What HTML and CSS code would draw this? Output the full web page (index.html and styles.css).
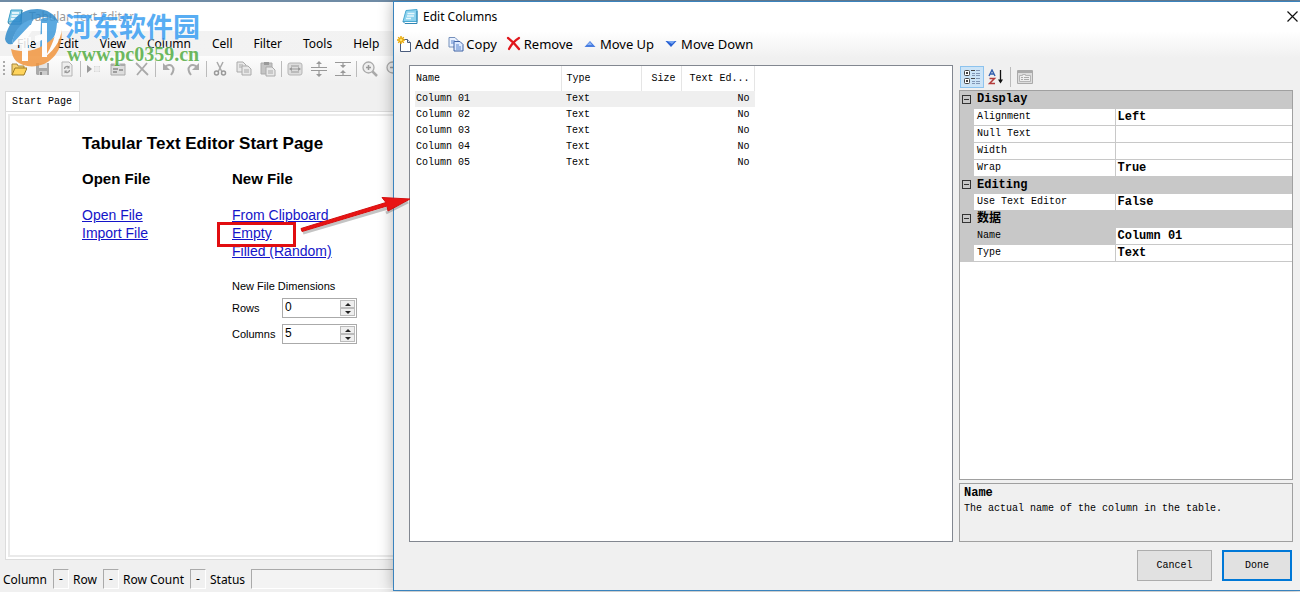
FILE: index.html
```html
<!DOCTYPE html>
<html lang="en">
<head>
<meta charset="utf-8">
<title>Tabular Text Editor</title>
<link rel="stylesheet" href="styles.css">
</head>
<body>
<div class="window">
  <header class="titlebar">
    <svg class="app-icon" width="16" height="16" viewBox="0 0 16 16"><path d="M4 1L15 1L13 13L1 13Z" fill="#8fd0ea" stroke="#3b9cc6"/><path d="M1 13l1 2h12l1-14" fill="none" stroke="#2a7ba5"/><path d="M5 4h7M4.500 7h7M4 10h5" stroke="#fff" stroke-width="1.500"/></svg>
    <span class="muted-title">Tabular Text Editor</span>
  </header>
  <nav class="menubar">
    <button class="menu">File</button><button class="menu">Edit</button><button class="menu">View</button><button class="menu">Column</button><button class="menu">Cell</button><button class="menu">Filter</button><button class="menu">Tools</button><button class="menu">Help</button>
  </nav>
  <div class="toolbar">
    <i class="grip"></i>
    <button class="tool" aria-label="Open"><svg width="16" height="16" viewBox="0 0 16 16"><path d="M1 14V3h5l1 2h6v3" fill="#f5d273" stroke="#a8873a"/><path d="M1 14L4 7h12l-3 7z" fill="#ffd45c" stroke="#9c7a22"/></svg></button>
    <button class="tool" aria-label="Save"><svg width="16" height="16" viewBox="0 0 16 16"><path d="M1 2h13v12H2l-1-1z" fill="#aaa"/><path d="M4 2h8v5H4z" fill="#e5e5e5"/><path d="M4 10h8v4H4z" fill="#ccc"/><path d="M5 11h2v3H5z" fill="#888"/></svg></button>
    <button class="tool" aria-label="Refresh"><svg width="16" height="16" viewBox="0 0 16 16"><path d="M3 1h7l3 3v11H3z" fill="#eee" stroke="#b5b5b5"/><path d="M5.500 8a2.500 2.500 0 0 1 4.500-1.500M10.500 9A2.500 2.500 0 0 1 6 10.500" fill="none" stroke="#999" stroke-width="1.300"/><path d="M10.500 4.500v3h-3zM5.500 12.500v-3h3z" fill="#999"/></svg></button>
    <i class="sep"></i>
    <button class="tool" aria-label="Insert"><svg width="16" height="16" viewBox="0 0 16 16"><path d="M1 4v8l5-4z" fill="#999"/><path d="M8 5h6v6H8z" fill="#d5d5d5"/><path d="M8 7h6M8 9h6M10 5v6M12 5v6" stroke="#f5f5f5"/></svg></button>
    <button class="tool" aria-label="Edit columns"><svg width="16" height="16" viewBox="0 0 16 16"><path d="M1 3h14v11H1z" fill="#ddd" stroke="#aaa"/><path d="M1 4h14" stroke="#aaa" stroke-width="2"/><path d="M3 8h5M3 11h4M9 9h4" stroke="#888" stroke-width="1.500"/></svg></button>
    <button class="tool" aria-label="Delete"><svg width="16" height="16" viewBox="0 0 16 16"><path d="M2 2l12 12M13 2L3 14" stroke="#aaa" stroke-width="1.800"/></svg></button>
    <i class="sep"></i>
    <button class="tool" aria-label="Undo"><svg width="16" height="16" viewBox="0 0 16 16"><path d="M4 6c5-5 12 0 6 8" fill="none" stroke="#aaa" stroke-width="2"/><path d="M2 2v7h7z" fill="#aaa"/></svg></button>
    <button class="tool" aria-label="Redo"><svg width="16" height="16" viewBox="0 0 16 16"><path d="M12 6C7 1 0 6 6 14" fill="none" stroke="#aaa" stroke-width="2"/><path d="M14 2v7H7z" fill="#aaa"/></svg></button>
    <i class="sep"></i>
    <button class="tool" aria-label="Cut"><svg width="16" height="16" viewBox="0 0 16 16"><path d="M5 1l5 10M11 1L6 11" stroke="#aaa" stroke-width="1.500"/><circle cx="4.500" cy="12" r="2" fill="none" stroke="#999" stroke-width="1.500"/><circle cx="11.500" cy="12" r="2" fill="none" stroke="#999" stroke-width="1.500"/></svg></button>
    <button class="tool" aria-label="Copy"><svg width="16" height="16" viewBox="0 0 16 16"><path d="M1 1h6l3 3v7H1z" fill="#e8e8e8" stroke="#aaa"/><path d="M6 5h6l3 3v6H6z" fill="#e8e8e8" stroke="#aaa"/><path d="M3 4h4M3 6h3M8 9h5M8 11h5" stroke="#aaa"/></svg></button>
    <button class="tool" aria-label="Paste"><svg width="16" height="16" viewBox="0 0 16 16"><path d="M1 2h11v11H1z" fill="#c4c4c4" stroke="#aaa"/><path d="M4 1h5v3H4z" fill="#999"/><path d="M6 6h6l3 3v6H6z" fill="#e8e8e8" stroke="#aaa"/><path d="M8 10h5M8 12h5" stroke="#aaa"/></svg></button>
    <i class="sep"></i>
    <button class="tool" aria-label="Fit width"><svg width="16" height="16" viewBox="0 0 16 16"><rect x="1" y="2" width="14" height="12" rx="2" fill="#ddd" stroke="#b5b5b5"/><path d="M4 5h8M4 11h8M3 8h10" stroke="#999"/><path d="M2 8l3-2v4zM14 8l-3-2v4z" fill="#999"/></svg></button>
    <button class="tool" aria-label="Expand rows"><svg width="16" height="16" viewBox="0 0 16 16"><path d="M0 6.500h16M0 9.500h16" stroke="#999"/><path d="M8 1v5M8 10v5" stroke="#888"/><path d="M8 0l3 3H5zM8 16l3-3H5z" fill="#999"/></svg></button>
    <button class="tool" aria-label="Collapse rows"><svg width="16" height="16" viewBox="0 0 16 16"><path d="M0 1.500h16M0 14.500h16" stroke="#999"/><path d="M8 2v4M8 10v4" stroke="#888"/><path d="M8 7l3-3H5zM8 9l3 3H5z" fill="#999"/></svg></button>
    <i class="sep"></i>
    <button class="tool" aria-label="Zoom in"><svg width="16" height="16" viewBox="0 0 16 16"><circle cx="6.500" cy="6.500" r="5.500" fill="#eee" stroke="#aaa" stroke-width="1.300"/><path d="M10.500 10.500l4.500 4.500" stroke="#aaa" stroke-width="2.500"/><path d="M4 6.500h5M6.500 4v5" stroke="#999" stroke-width="1.500"/></svg></button>
    <button class="tool" aria-label="Zoom out"><svg width="16" height="16" viewBox="0 0 16 16"><circle cx="6.500" cy="6.500" r="5.500" fill="#eee" stroke="#aaa" stroke-width="1.300"/><path d="M4 6.500h5" stroke="#999" stroke-width="1.500"/></svg></button>
  </div>
  <div class="tabs"><button class="tab">Start Page</button></div>
  <main class="tab-page">
    <div class="start">
      <h1>Tabular Text Editor Start Page</h1>
      <div class="start-columns">
        <section>
          <h2>Open File</h2>
          <a href="#">Open File</a>
          <a href="#">Import File</a>
        </section>
        <section>
          <h2>New File</h2>
          <a href="#">From Clipboard</a>
          <a href="#" class="marked">Empty</a>
          <a href="#">Filled (Random)</a>
          <p class="dimensions">New File Dimensions</p>
          <div class="field"><label for="rows">Rows</label><span class="spinner"><input id="rows" type="text" value="0"><span class="spin-buttons"><button aria-label="More rows"><i class="up"></i></button><button aria-label="Fewer rows"><i class="down"></i></button></span></span></div>
          <div class="field"><label for="columns">Columns</label><span class="spinner"><input id="columns" type="text" value="5"><span class="spin-buttons"><button aria-label="More columns"><i class="up"></i></button><button aria-label="Fewer columns"><i class="down"></i></button></span></span></div>
        </section>
      </div>
    </div>
  </main>
  <footer class="status">
    <span>Column</span><span class="cell">-</span><span>Row</span><span class="cell">-</span><span>Row Count</span><span class="cell">-</span><span>Status</span><span class="cell fill"></span>
  </footer>
</div>

<div class="dialog" role="dialog" aria-label="Edit Columns">
  <header class="dialog-title">
    <svg width="16" height="16" viewBox="0 0 16 16"><path d="M4 1.500l11-1v12H1z" fill="#8fd3ee" stroke="#4aa9d2"/><path d="M1 12.500l2 2h12V2" fill="none" stroke="#2f86b4"/><path d="M5.500 4.500h7M5 7h7M4 9.500h5" stroke="#e6f7fd" stroke-width="1.300"/></svg>
    <span>Edit Columns</span>
    <button class="close" aria-label="Close"><svg width="11" height="11" viewBox="0 0 11 11"><path d="M.5.5l10 10M10.500.5l-10 10" stroke="#111" stroke-width="1.200"/></svg></button>
  </header>
  <div class="dialog-tools">
    <button><svg width="16" height="16" viewBox="0 0 16 16"><path d="M3.500 3.500h7l3 3v9h-10z" fill="#fff" stroke="#4a5c7c"/><path d="M10.500 3.500v3h3" fill="#dce6f5" stroke="#4a5c7c"/><path d="M4 0v8M0 4h8M1.200 1.200l5.600 5.600M6.800 1.200L1.200 6.800" stroke="#e8a800" stroke-width="1.400"/><circle cx="4" cy="4" r="2" fill="#ffe26a" stroke="#eaa400"/></svg>Add</button>
    <button><svg width="16" height="16" viewBox="0 0 16 16"><path d="M1 1.500h6l3 3V11H1z" fill="#e9f1ff" stroke="#7590bb"/><path d="M6 5.500h6l3 3V15H6z" fill="#dce9ff" stroke="#3f62a4"/><path d="M3 5h4M3 7h3M8 9h3M8 11h5M8 13h5" stroke="#5d87cd"/></svg>Copy</button>
    <button><svg width="16" height="16" viewBox="0 0 16 16"><path d="M2 2c4 3 8 7 11 11M13 2C8 5 5 9 3 13" fill="none" stroke="#e0161b" stroke-width="2.200" stroke-linecap="round"/></svg>Remove</button>
    <button><svg width="16" height="16" viewBox="0 0 16 16"><path d="M8 5l5.500 6h-11z" fill="#477ce0"/><path d="M8 6l2 3H5z" fill="#8db5f5"/></svg>Move Up</button>
    <button><svg width="16" height="16" viewBox="0 0 16 16"><path d="M2.500 5h11L8 11z" fill="#2760d2"/><path d="M4 5h8L9 8z" fill="#76a6f3"/></svg>Move Down</button>
  </div>
  <div class="dialog-body">
    <div class="list">
      <table>
        <colgroup><col class="c-name"><col class="c-type"><col class="c-size"><col class="c-edit"></colgroup>
        <thead><tr><th>Name</th><th>Type</th><th class="r">Size</th><th>Text Ed...</th></tr></thead>
        <tbody>
          <tr class="selected"><td>Column 01</td><td>Text</td><td></td><td class="r">No</td></tr>
          <tr><td>Column 02</td><td>Text</td><td></td><td class="r">No</td></tr>
          <tr><td>Column 03</td><td>Text</td><td></td><td class="r">No</td></tr>
          <tr><td>Column 04</td><td>Text</td><td></td><td class="r">No</td></tr>
          <tr><td>Column 05</td><td>Text</td><td></td><td class="r">No</td></tr>
        </tbody>
      </table>
    </div>
    <aside class="properties">
      <div class="prop-tools">
        <button class="on" aria-label="Categorized"><svg width="18" height="16" viewBox="0 0 18 16"><rect x="1.500" y="1.500" width="5" height="5" rx="1" fill="#fff" stroke="#444"/><rect x="1.500" y="9.500" width="5" height="5" rx="1" fill="#fff" stroke="#444"/><path d="M3 4h2M4 3v2M3 12h2M4 11v2" stroke="#000"/><path d="M8 1.500h4M8 9.500h4" stroke="#444"/><path d="M9 4.500h3M13 4.500h4M9 6.500h3M13 6.500h4M9 12.500h3M13 12.500h4M9 14.500h3M13 14.500h4M13 1.500h4M13 9.500h4" stroke="#8196b5"/></svg></button>
        <button aria-label="Alphabetical"><svg width="16" height="16" viewBox="0 0 16 16"><path d="M1 7l3-6 3 6M2 5h4" fill="none" stroke="#315fae" stroke-width="1.400"/><path d="M1.500 9.500h5l-5 5h5.500" fill="none" stroke="#b33b3b" stroke-width="1.500"/><path d="M12.500 1v12" stroke="#111" stroke-width="1.300"/><path d="M10 10.500h5l-2.500 4z" fill="#111"/></svg></button>
        <i class="sep"></i>
        <button aria-label="Property pages"><svg width="16" height="16" viewBox="0 0 16 16"><path d="M.5 1.500h15v13H.5z" fill="#ddd" stroke="#aaa"/><path d="M1 3h14" stroke="#aaa" stroke-width="2"/><path d="M2.500 6.500h3v-1h3v1h5v6h-11z" fill="#eee" stroke="#b5b5b5"/><path d="M4 8.500h2M7 8.500h5M4 10.500h2M7 10.500h5" stroke="#aaa"/></svg></button>
      </div>
      <div class="prop-grid">
        <table>
          <colgroup><col class="p-gutter"><col class="p-name"><col></colgroup>
          <tbody>
            <tr class="cat"><td><i class="minus"></i></td><th colspan="2">Display</th></tr>
            <tr><td></td><th>Alignment</th><td>Left</td></tr>
            <tr><td></td><th>Null Text</th><td></td></tr>
            <tr><td></td><th>Width</th><td></td></tr>
            <tr><td></td><th>Wrap</th><td>True</td></tr>
            <tr class="cat"><td><i class="minus"></i></td><th colspan="2">Editing</th></tr>
            <tr><td></td><th>Use Text Editor</th><td>False</td></tr>
            <tr class="cat"><td><i class="minus"></i></td><th colspan="2">数据</th></tr>
            <tr class="current"><td></td><th>Name</th><td>Column 01</td></tr>
            <tr><td></td><th>Type</th><td>Text</td></tr>
          </tbody>
        </table>
      </div>
      <div class="description"><strong>Name</strong><span>The actual name of the column in the table.</span></div>
    </aside>
  </div>
  <footer class="actions"><button>Cancel</button><button class="default">Done</button></footer>
</div>

<svg class="arrow" width="124" height="60" viewBox="0 0 124 60">
  <path d="M7 42L92 17M90 22l22-11" stroke="#555" stroke-width="3" fill="none" opacity=".35"/>
  <path d="M5 37.500L90 11.500l-4-5L114 8 92 20l-1-5L6 40.500z" fill="#e81414" stroke="#d40e0e" stroke-linejoin="round"/>
</svg>

<div class="watermark">
  <svg width="60" height="68" viewBox="0 0 60 68">
    <path d="M1 37C4 20 16 7 33 7c10 0 18 5 22 14-8-6-16-8-24-4C17 21 9 31 8 42c-4 1-6-1-7-5z" fill="#2f8acb"/>
    <path d="M8 42C9 30 16 20 29 17c-2 8-8 17-15 24z" fill="#3f9bdb"/>
    <path d="M37 17c8-3 15 0 18 5-3 12-10 22-19 28z" fill="#3f9bdb"/>
    <path d="M57 27c3 15-4 29-17 35-10 4-21 3-28-3-3-3-4-7-5-12 12 4 24 2 33-4 8-5 13-10 17-16z" fill="#f1963f"/>
    <path d="M9 41l17-18h6l-8 12h3v8h-3v16h-6V43H9zM31 34l7-2V21h5v34h-5V38l-7 3z" fill="#fff"/>
    <path d="M58 20c1 15-6 27-17 35 7-11 11-21 12-34z" fill="#fff"/>
  </svg>
  <div><span class="mark-name">河东软件园</span><span class="mark-url">www.pc0359.cn</span></div>
</div>
</body>
</html>
```
FILE: styles.css
```css
*, *::after { box-sizing: border-box; }
html, body { height: 100%; }
body {
  margin: 0;
  overflow: hidden;
  position: relative;
  background: #f0f0f0;
  color: #000;
  font: 12px/16px "Noto Sans", "Noto Sans CJK SC", sans-serif;
}
button { font: inherit; color: inherit; border: 0; background: none; padding: 0; }
svg { display: block; flex: none; }

/* main window */
.window { min-height: 100vh; display: flex; flex-direction: column; border-top: 2px solid #6f8ba5; }
.titlebar { height: 29px; background: #fff; display: flex; align-items: center; gap: 6px; padding-left: 7px; }
.muted-title { color: #999; }
.menubar { height: 25px; background: linear-gradient(90deg, #f1f1f1, #f7f7f7); display: flex; align-items: center; gap: 21px; padding-left: 17px; }
.toolbar { height: 25px; display: flex; align-items: center; gap: 8px; padding-left: 3px; background: linear-gradient(#fdfdfd, #f0f0f0); }
.grip { width: 2px; height: 16px; margin-right: -2px; background: repeating-linear-gradient(#aaa 0 2px, transparent 2px 4px); }
.sep { width: 1px; height: 16px; background: #bbb; margin: 0 -3px; }
.tabs { padding: 10px 5px 0; display: flex; margin-bottom: -1px; }
.tab { height: 21px; padding: 0 7px 0 6px; background: #fff; border: 1px solid #d9d9d9; border-bottom: 0; font: 10px/20px "Liberation Mono", monospace; }
.tab-page { flex: 1; margin: 0 5px; padding: 2px; background: #fff; border: 1px solid #dcdcdc; display: flex; }
.start { flex: 1; border: 2px solid #eaeaea; padding: 17px 72px; font: 14px/18px "Liberation Sans", Arial, sans-serif; }
h1 { margin: 0; font-size: 17px; line-height: 22px; font-weight: 700; }
h2 { margin: 0 0 18px; font-size: 15px; line-height: 18px; }
.start-columns { display: grid; grid-template-columns: 150px 160px; margin-top: 15px; }
.start-columns section { display: flex; flex-direction: column; align-items: flex-start; }
a { color: #1414c8; }
.marked { position: relative; }
.marked::after { content: ""; position: absolute; left: -15px; top: -2px; width: 79px; height: 25px; border: 3px solid #e10d10; }
.dimensions { margin: 18px 0 4px; font-size: 11px; line-height: 16px; }
.field { display: flex; align-items: center; height: 20px; margin-bottom: 6px; font-size: 11px; }
.field label { width: 50px; }
.spinner { display: flex; width: 75px; height: 20px; padding: 1px; border: 1px solid #aaa; background: #fff; }
.spinner input { flex: 1; min-width: 0; border: 0; padding: 0 0 2px 1px; font: 12px "Liberation Sans", sans-serif; outline: 0; }
.spin-buttons { display: grid; width: 15px; }
.spin-buttons button { display: grid; place-items: center; background: #eee; border: 1px solid #bbb; }
.up, .down { border: 3px solid transparent; border-bottom: 3px solid #222; border-top: 0; }
.down { border-top: 3px solid #222; border-bottom: 0; }
.status { height: 32px; padding: 9px 0 3px 3px; display: flex; gap: 4px; line-height: 21px; }
.status .cell { width: 16px; margin-left: 2px; border: 1px solid #fff; border-color: #aaa #fff #fff #aaa; text-align: center; line-height: 18px; }
.status .fill { flex: 1; background: #f3f3f3; }

/* edit columns dialog */
.dialog { position: absolute; left: 393px; right: 0; top: 1px; bottom: 1px; background: #f0f0f0; border: 1px solid #3a83bd; border-right: 0; box-shadow: 0 0 14px rgba(0, 0, 0, .3); display: flex; flex-direction: column; }
.dialog-title { height: 29px; display: flex; align-items: center; gap: 5px; padding: 0 2px 0 8px; background: #fff; }
.close { margin-left: auto; }
.dialog-tools { height: 27px; display: flex; align-items: center; gap: 9px; padding: 0 0 2px 3px; background: linear-gradient(#fff, #f0f0f0); font-size: 13px; }
.dialog-tools button { display: flex; align-items: center; gap: 2px; }
.dialog-body { flex: 1; display: flex; gap: 6px; padding: 7px 7px 0 15px; font: 10px/16px "Liberation Mono", "Noto Sans CJK SC", monospace; }
.list { flex: 1; background: #fff; border: 1px solid #828790; }
table { border-collapse: collapse; table-layout: fixed; }
th { text-align: left; font-weight: 400; }
td, th { padding: 0; white-space: nowrap; }
.list table { width: 340px; margin-left: 5px; }
.c-name { width: 146px; }
.c-type { width: 80px; }
.c-size { width: 40px; }
.list th { height: 25px; border-right: 1px solid #e5e5e5; }
.list td { height: 16px; }
.list th, .list td { padding: 0 5px; }
.list th:first-child, .list td:first-child { padding-left: 1px; }
.list th:last-child { padding-left: 8px; }
.list .r { text-align: right; }
.selected { background: #efefef; }
.properties { width: 334px; display: flex; flex-direction: column; }
.prop-tools { height: 25px; display: flex; align-items: center; gap: 2px; padding: 0 1px 2px; }
.prop-tools button { height: 22px; padding: 0 2px; }
.prop-tools .on { background: #cce4f7; border: 1px solid #8dc3ee; }
.prop-tools .sep { height: 20px; margin: 0 2px; }
.prop-grid { flex: 1; background: #fff; border: 1px solid #a0a0a0; }
.prop-grid table { width: 100%; }
.p-gutter { width: 14px; }
.p-name { width: 141px; }
.prop-grid tr { height: 17px; line-height: 16px; border-bottom: 1px solid #c8c8c8; }
.prop-grid td:first-child, .cat, .current th { background: #c8c8c8; }
.prop-grid th { padding-left: 3px; border-right: 1px solid #c8c8c8; }
.prop-grid td + th + td { padding-left: 2px; }
.prop-grid td, .prop-grid .cat th { font-size: 12px; font-weight: 700; }
.minus { display: block; width: 9px; height: 9px; margin-left: 2px; border: 1px solid #333; background: linear-gradient(#333, #333) center / 5px 1px no-repeat; }
.description { height: 59px; margin-top: 3px; padding: 1px 4px; border: 1px solid #a0a0a0; display: flex; flex-direction: column; }
.description strong { font-size: 12px; }
.actions { height: 48px; padding: 8px 8px 9px; display: flex; justify-content: flex-end; gap: 10px; font: 10px "Liberation Mono", monospace; }
.actions button { width: 75px; background: #e1e1e1; border: 1px solid #adadad; }
.actions .default { width: 70px; border: 2px solid #0078d7; }

/* annotations over both windows */
.arrow { position: absolute; left: 296px; top: 191px; }
.watermark { position: absolute; left: 4px; top: 2px; display: flex; gap: 1px; pointer-events: none; opacity: .85; }
.watermark span { display: block; text-shadow: 0 0 2px #fff, 0 0 2px #fff; }
.mark-name { margin-top: 8px; font: 700 27px/32px "Noto Sans CJK SC", sans-serif; color: #3b9ff2; }
.mark-url { font: 700 20px/24px "Liberation Serif", serif; color: #55ad45; padding-left: 2px; }
```
